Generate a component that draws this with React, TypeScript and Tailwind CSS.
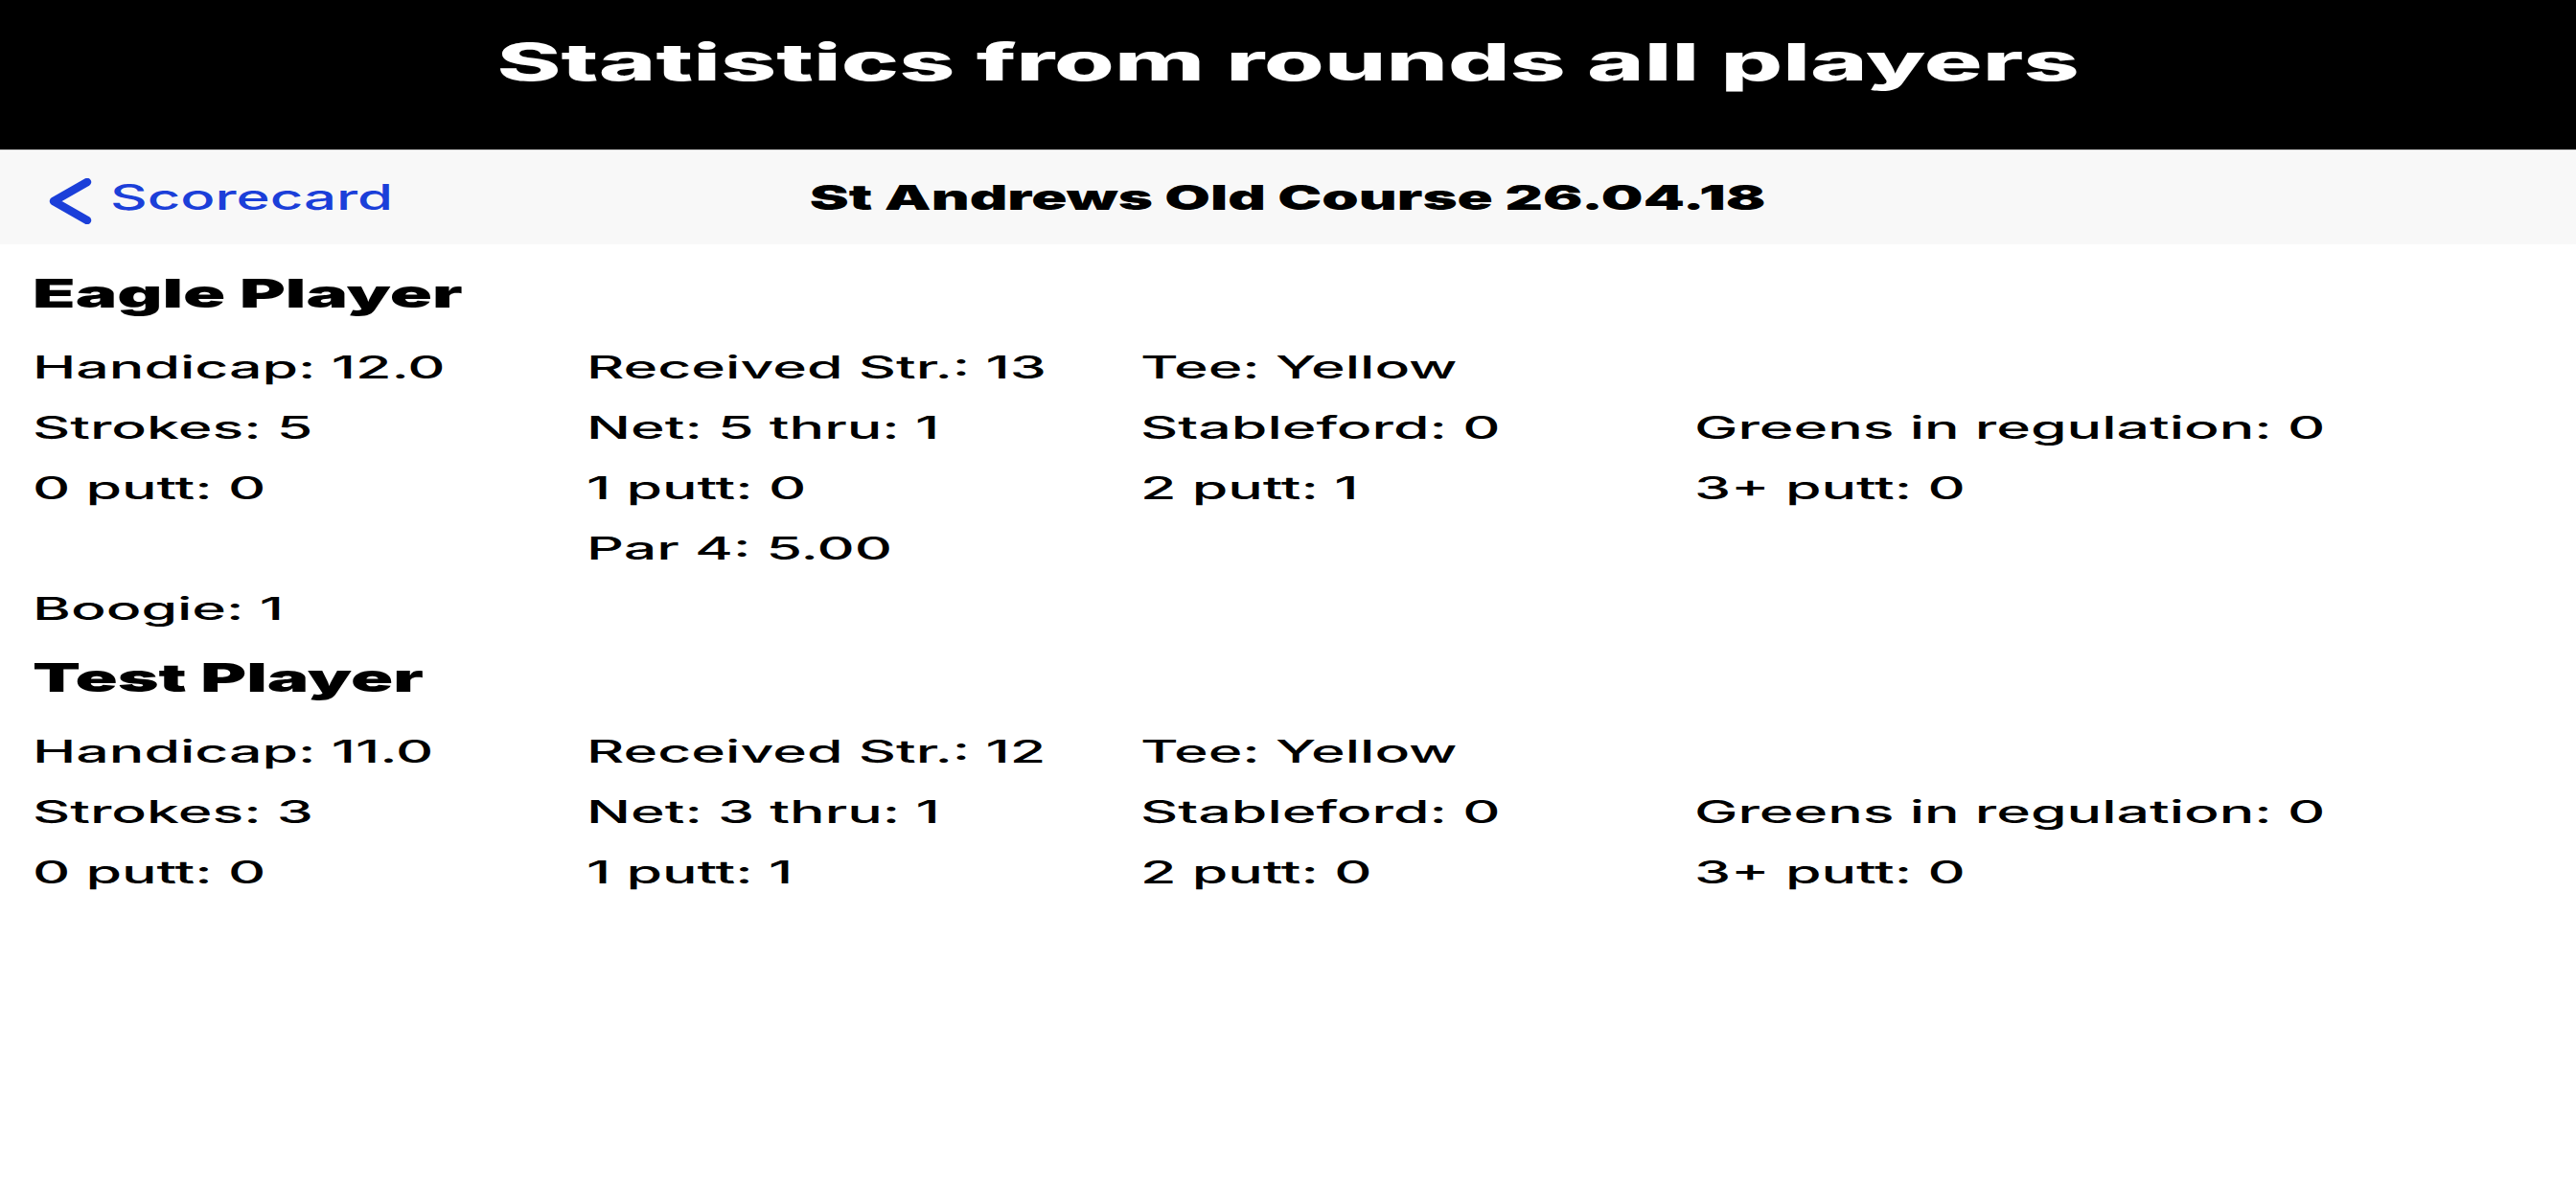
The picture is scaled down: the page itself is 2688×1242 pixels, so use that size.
import React from 'react';

type Player = {
  name: string;
  rows: string[][];
};

const players: Player[] = [
  {
    name: 'Eagle Player',
    rows: [
      ['Handicap: 12.0', 'Received Str.: 13', 'Tee: Yellow', ''],
      ['Strokes: 5', 'Net: 5 thru: 1', 'Stableford: 0', 'Greens in regulation: 0'],
      ['0 putt: 0', '1 putt: 0', '2 putt: 1', '3+ putt: 0'],
      ['', 'Par 4: 5.00', '', ''],
      ['Boogie: 1', '', '', ''],
    ],
  },
  {
    name: 'Test Player',
    rows: [
      ['Handicap: 11.0', 'Received Str.: 12', 'Tee: Yellow', ''],
      ['Strokes: 3', 'Net: 3 thru: 1', 'Stableford: 0', 'Greens in regulation: 0'],
      ['0 putt: 0', '1 putt: 1', '2 putt: 0', '3+ putt: 0'],
    ],
  },
];

// the source screenshot is stretched sideways, so glyphs get widened here too
const Wide: React.FC<{ children: React.ReactNode; className: string }> = ({ children, className }) => (
  <span className={`inline-block whitespace-nowrap ${className}`}>{children}</span>
);

const PlayerStats: React.FC<{ player: Player }> = ({ player }) => (
  <div>
    <h2 className="mb-[6px] text-[41px] leading-[80px] font-black text-black">
      <Wide className="origin-left scale-x-[1.78]">{player.name}</Wide>
    </h2>
    {player.rows.map((row, i) => (
      <div key={i} className="flex h-[63px] text-[32px] leading-[63px] font-medium text-black">
        {row.map((cell, j) => (
          <div key={j} className="w-[578px] shrink-0">
            {cell && <Wide className="origin-left scale-x-[1.9]">{cell}</Wide>}
          </div>
        ))}
      </div>
    ))}
  </div>
);

const App: React.FC = () => {
  return (
    <div className="min-h-screen w-full bg-white font-['Inter',sans-serif]">
      <div className="h-[156px] bg-black pt-[38px] text-center text-[54px] leading-none font-extrabold text-white">
        <Wide className="origin-center scale-x-[1.88]">Statistics from rounds all players</Wide>
      </div>
      <div className="relative flex h-[99px] items-center border-t border-[#d4d4d4] bg-[#f8f8f8]">
        <div className="flex items-center pl-[50px]">
          <svg width="47" height="48" viewBox="0 0 47 48" className="mt-[8px]">
            <polyline
              points="41,4 6,24 41,44"
              fill="none"
              stroke="#1b3fd9"
              strokeWidth="8.5"
              strokeLinecap="round"
              strokeLinejoin="round"
            />
          </svg>
          <span className="ml-[18px] text-[37px] font-medium text-[#1b3fd9]">
            <Wide className="origin-left scale-x-[1.62]">Scorecard</Wide>
          </span>
        </div>
        <div className="pointer-events-none absolute inset-0 flex items-center justify-center text-[36px] font-black text-black">
          <Wide className="origin-center scale-x-[1.71]">St Andrews Old Course 26.04.18</Wide>
        </div>
      </div>
      <div className="pl-[34px] pt-[11px]">
        {players.map((p) => (
          <PlayerStats key={p.name} player={p} />
        ))}
      </div>
    </div>
  );
};

export default App;
